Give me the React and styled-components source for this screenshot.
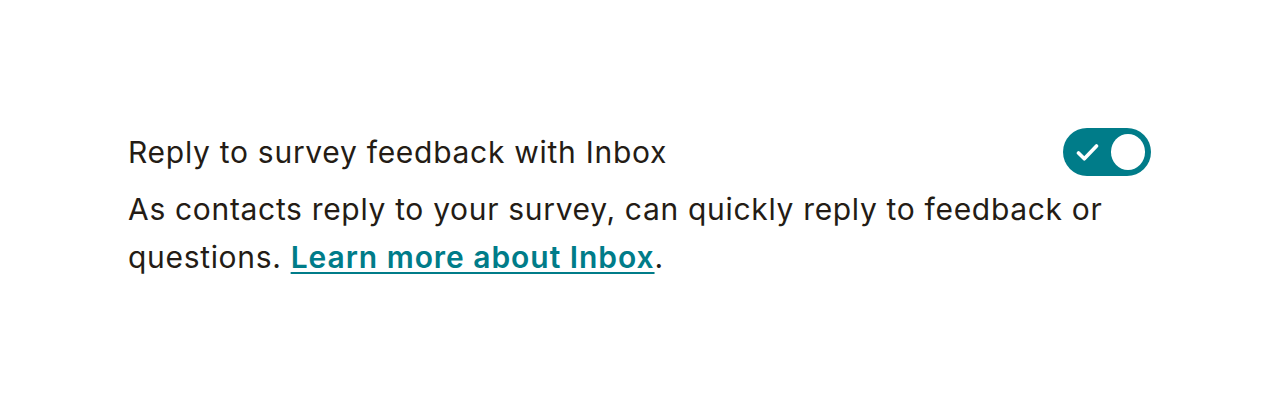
import React, { useState } from "react";
import styled, { createGlobalStyle } from "styled-components";

const Global = createGlobalStyle`
  html, body { margin: 0; padding: 0; background: #ffffff; }
  body { font-family: "Inter", "Open Sans", sans-serif; color: #241c15; }
`;

const Page = styled.main`
  padding: 128px 128px 0 128px;
  width: 1279px;
  box-sizing: border-box;
`;

const Setting = styled.section`
  display: flex;
  flex-direction: column;
  width: 1023px;
`;

const HeaderRow = styled.div`
  display: flex;
  align-items: center;
  justify-content: space-between;
  height: 48px;
`;

const Title = styled.h3`
  margin: 0;
  font-size: 30px;
  font-weight: 400;
  line-height: 48px;
  letter-spacing: 0.72px;
`;

const Description = styled.p`
  margin: 9px 0 0 0;
  font-size: 30px;
  line-height: 48px;
  letter-spacing: 0.68px;
  max-width: 1000px;
`;

const Link = styled.a`
  color: #007c89;
  font-weight: 600;
  letter-spacing: 0.95px;
  text-decoration: underline;
  text-decoration-thickness: 2px;
  text-underline-offset: 4px;
`;

const Track = styled.button`
  width: 88px;
  height: 48px;
  border-radius: 24px;
  border: none;
  padding: 0 6px 0 0;
  background: ${(p) => (p.$on ? "#007c89" : "#c4c4c4")};
  display: flex;
  align-items: center;
  justify-content: space-between;
  cursor: pointer;
  box-sizing: border-box;
`;

const Check = styled.span`
  display: flex;
  width: 48px;
  justify-content: center;
  padding-left: 2px;
`;

const Knob = styled.span`
  width: 36px;
  height: 36px;
  border-radius: 50%;
  background: #ffffff;
`;

export default function App() {
  const [on, setOn] = useState(true);
  return (
    <>
      <Global />
      <Page>
        <Setting>
          <HeaderRow>
            <Title>Reply to survey feedback with Inbox</Title>
            <Track $on={on} onClick={() => setOn(!on)} aria-pressed={on}>
              <Check>
                <svg width="23" height="19" viewBox="0 0 23 19" fill="none">
                  <path d="M2.5 10 L8.3 15.8 L20.5 3" stroke="#fff" strokeWidth="3.6" strokeLinecap="round" strokeLinejoin="round" />
                </svg>
              </Check>
              <Knob />
            </Track>
          </HeaderRow>
          <Description>
            As contacts reply to your survey, can quickly reply to feedback or questions.{" "}
            <Link href="#">Learn more about Inbox</Link>.
          </Description>
        </Setting>
      </Page>
    </>
  );
}
